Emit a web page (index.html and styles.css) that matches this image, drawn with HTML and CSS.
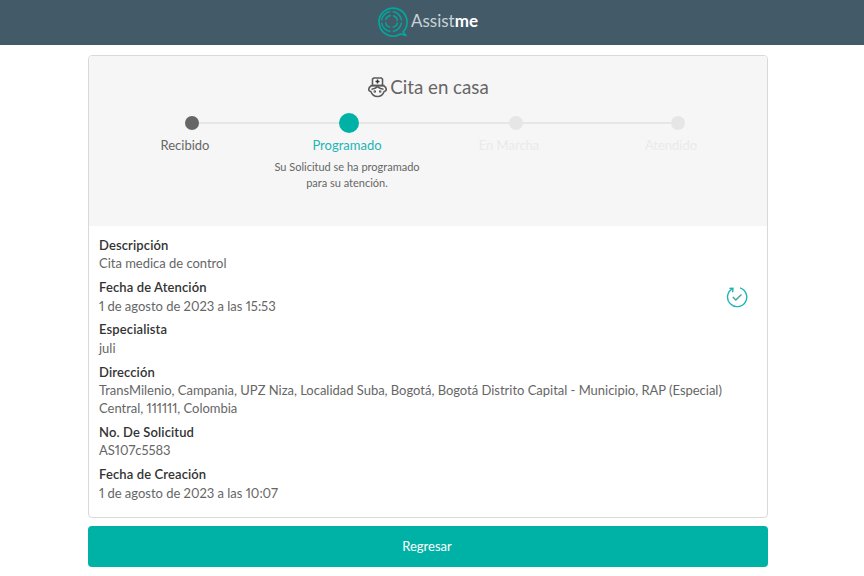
FILE: index.html
```html
<!DOCTYPE html>
<html lang="es">
<head>
<meta charset="utf-8">
<title>Assistme</title>
<link rel="stylesheet" href="styles.css">
</head>
<body>
<header class="topbar">
  <svg class="logo" width="32" height="32" viewBox="0 0 32 32" fill="none" stroke="#00a89c">
    <path d="M27 26A14 14 0 1 0 24.5 28L30 29.5Z" stroke-width="1.7" stroke-linejoin="round"/>
    <circle cx="15.5" cy="15.5" r="10" stroke-width="1.5" stroke-dasharray="13.2 2.5" stroke-dashoffset="-1"/>
    <circle cx="15.5" cy="15.5" r="6" stroke-width="1.4" stroke-dasharray="7 2.4" stroke-dashoffset="-1"/>
  </svg>
  <span class="brand">Assist<b>me</b></span>
</header>
<main class="page">
  <section class="card">
    <div class="status">
      <h1 class="title">
        <svg class="nurse" width="21" height="21" viewBox="0 0 21 21" fill="none" stroke="#5a5a5a" stroke-width="1.6">
          <path d="M5.5 8.5V2.2L6.8 1H14.2L15.5 2.2V8.5Z" fill="#fff"/>
          <path d="M10.5 2.5V6.5M8.5 4.5H12.5" stroke="#333" stroke-width="1.5"/>
          <path d="M3.5 8.6H17.5" stroke-width="1.8"/>
          <path d="M4.2 9C1 10.5 1 14 3.8 14.5C5 17.6 7.8 19.5 10.5 19.5C13.2 19.5 16 17.6 17.2 14.5C20 14 20 10.5 16.8 9"/>
          <path d="M4.5 12.2C7 12.2 9 11 10.5 9.6C12 11 14 12.2 16.5 12.2"/>
          <circle cx="7.8" cy="14.5" r=".5"/>
          <circle cx="13.2" cy="14.5" r=".5"/>
        </svg>
        <span>Cita en casa</span>
      </h1>
      <ol class="steps">
        <li class="step done">
          <span class="dot"></span>
          <span class="label">Recibido</span>
        </li>
        <li class="step current">
          <span class="dot"></span>
          <span class="label">Programado</span>
          <p class="note">Su Solicitud se ha programado<br>para su atención.</p>
        </li>
        <li class="step">
          <span class="dot"></span>
          <span class="label">En Marcha</span>
        </li>
        <li class="step">
          <span class="dot"></span>
          <span class="label">Atendido</span>
        </li>
      </ol>
    </div>
    <div class="details">
      <dl class="fields">
        <div class="field"><dt>Descripción</dt><dd>Cita medica de control</dd></div>
        <div class="field"><dt>Fecha de Atención</dt><dd>1 de agosto de 2023 a las 15:53</dd></div>
        <div class="field"><dt>Especialista</dt><dd>juli</dd></div>
        <div class="field"><dt>Dirección</dt><dd>TransMilenio, Campania, UPZ Niza, Localidad Suba, Bogotá, Bogotá Distrito Capital - Municipio, RAP (Especial) Central, 111111, Colombia</dd></div>
        <div class="field"><dt>No. De Solicitud</dt><dd>AS107c5583</dd></div>
        <div class="field"><dt>Fecha de Creación</dt><dd>1 de agosto de 2023 a las 10:07</dd></div>
      </dl>
      <svg class="state-icon" width="22" height="22" viewBox="0 0 22 22" fill="none" stroke="#1cb5b5" stroke-width="1.4">
        <path d="M6.2 2.8A9.6 9.6 0 1 0 14 1.9"/>
        <path d="M3.4 2.4L7 2.2L6.6 6.2" stroke-linejoin="round"/>
        <path d="M6.8 11L9.8 14L15.5 8.5" stroke="#3fa39b"/>
      </svg>
    </div>
  </section>
  <button class="back" type="button">Regresar</button>
</main>
</body>
</html>
```
FILE: styles.css
```css
* { box-sizing: border-box; }
html, body { margin: 0; padding: 0; }
body {
  background: #fff;
  font-family: Lato, "Liberation Sans", sans-serif;
  font-size: 13px;
  font-variant-numeric: proportional-nums;
  color: #666;
}
.topbar {
  height: 45px;
  background: #435b69;
  display: flex;
  align-items: center;
  justify-content: center;
  gap: 3px;
  padding-right: 9px;
  padding-bottom: 5px;
}
.logo { display: block; margin-top: 3px; margin-left: -1px; }
.brand { font-size: 17px; color: #c9d2d6; }
.brand b { color: #fff; font-weight: 700; }
.page {
  width: 680px;
  margin: 10px 0 0 88px;
}
.card {
  border: 1px solid #d9d9d9;
  border-radius: 4px;
  overflow: hidden;
  height: 463px;
}
.status {
  background: #f6f6f6;
  height: 170px;
  padding-top: 18px;
}
.title {
  margin: 0;
  height: 26px;
  display: flex;
  justify-content: center;
  align-items: center;
  gap: 2px;
  font-size: 18.7px;
  font-weight: 400;
  color: #666;
}
.steps {
  list-style: none;
  margin: 3px 0 0 15px;
  padding: 0;
  display: grid;
  grid-template-columns: repeat(4, 162px);
  width: 648px;
}
.step {
  position: relative;
  display: flex;
  flex-direction: column;
  align-items: center;
  padding-top: 10px;
}
.step::before {
  content: "";
  position: absolute;
  top: 19px;
  left: 50%;
  width: 100%;
  height: 2px;
  background: #e6e6e6;
}
.step:last-child::before { display: none; }
.dot {
  position: relative;
  width: 14px;
  height: 14px;
  border-radius: 50%;
  background: #e6e6e6;
  margin: 3px 0 3px 14px;
}
.done .dot { background: #666; }
.current .dot {
  width: 20px;
  height: 20px;
  margin: 0 0 0 4px;
  background: #00b2a5;
}
.label {
  margin-top: 3px;
  line-height: 18px;
  color: #eaeaea;
}
.done .label { color: #666; }
.current .label { color: #1cb5b5; }
.note {
  margin: 5px 0 0;
  font-size: 11px;
  line-height: 16px;
  text-align: center;
  color: #666;
}
.details {
  display: flex;
  align-items: flex-start;
  background: #fff;
  padding: 9.93px 19px 0 10px;
}
.fields { margin: 0; flex: 1; }
.field { margin-bottom: 5.72px; }
dt {
  color: #333;
  font-weight: 600;
  line-height: 18.7px;
  margin-bottom: -.2px;
  letter-spacing: .12px;
}
dd {
  margin: 0;
  line-height: 18px;
  max-width: 630px;
  letter-spacing: -.02px;
}
.state-icon { flex: none; margin-top: 50.07px; }
.back {
  display: block;
  width: 100%;
  height: 41px;
  margin-top: 8px;
  padding: 0 2px 2px 0;
  border: 0;
  border-radius: 4px;
  background: #00b2a5;
  color: #fff;
  font: 13px Lato, "Liberation Sans", sans-serif;
}
```
